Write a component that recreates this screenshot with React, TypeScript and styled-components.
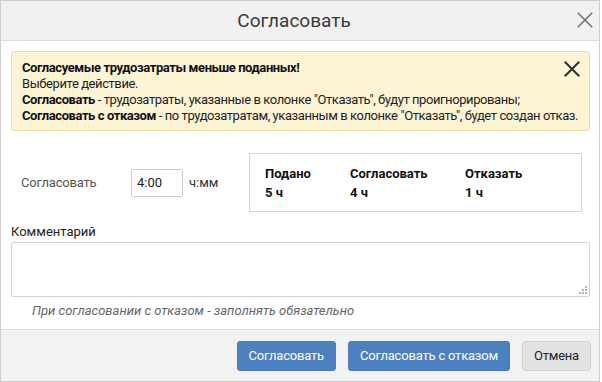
import React from "react";
import styled, { createGlobalStyle } from "styled-components";

const GlobalStyle = createGlobalStyle`
  html, body {
    margin: 0;
    padding: 0;
    background: #ffffff;
  }
  body {
    font-family: Roboto, "Liberation Sans", Arial, sans-serif;
    font-size: 13px;
    color: #222;
  }
`;

const Dialog = styled.div`
  box-sizing: border-box;
  width: 600px;
  height: 382px;
  border: 1px solid #cfcfcf;
  display: flex;
  flex-direction: column;
  background: #fff;
`;

const Header = styled.div`
  position: relative;
  height: 39px;
  flex: none;
  background: #f1f1f1;
  border-bottom: 1px solid #dcdcdc;
  display: flex;
  align-items: center;
  justify-content: center;
`;

const Title = styled.div`
  font-size: 19px;
  color: #3a3a3a;
  margin-left: -12px;
`;

const CloseButton = styled.button<{ $size: number; $color: string }>`
  position: absolute;
  top: 10px;
  right: 5px;
  border: 0;
  background: transparent;
  padding: 0;
  width: ${(p) => p.$size}px;
  height: ${(p) => p.$size}px;
  color: ${(p) => p.$color};
  display: flex;
  cursor: pointer;
`;

const Body = styled.div`
  flex: 1;
  padding: 10px 9px 0 10px;
  display: flex;
  flex-direction: column;
`;

const Alert = styled.div`
  position: relative;
  height: 80px;
  box-sizing: border-box;
  background: #fdf4d6;
  border: 1px solid #f0dc9e;
  border-radius: 3px;
  padding: 8px 0 0 10px;
  line-height: 16px;
  letter-spacing: -0.42px;
  color: #1e1e1e;
`;

const AlertClose = styled(CloseButton)`
  top: 8px;
  right: 8px;
`;

const Strong = styled.b`
  font-weight: bold;
  color: #111;
`;

const Row = styled.div`
  display: flex;
  align-items: center;
  margin-top: 22px;
  height: 59px;
`;

const FieldLabel = styled.div`
  width: 110px;
  padding-left: 10px;
  letter-spacing: -0.2px;
  color: #555;
`;

const TimeInput = styled.input`
  box-sizing: border-box;
  width: 52px;
  height: 28px;
  border: 1px solid #cccccc;
  border-radius: 2px;
  font-family: inherit;
  font-size: 13px;
  padding: 0 5px;
  color: #222;
  outline: none;
`;

const Unit = styled.div`
  margin-left: 6px;
  width: 60px;
  color: #333;
`;

const Summary = styled.div`
  box-sizing: border-box;
  width: 333px;
  height: 59px;
  border: 1px solid #c7d5e8;
  padding: 12px 0 0 15px;
  display: grid;
  grid-template-columns: 85px 115px 1fr;
  grid-auto-rows: 16px;
  row-gap: 3px;
  line-height: 16px;
  font-weight: bold;
  color: #111;
`;

const CommentLabel = styled.div`
  margin-top: 12px;
  line-height: 16px;
  color: #222;
`;

const TextAreaWrap = styled.div`
  position: relative;
  margin-top: 2px;
`;

const Comment = styled.textarea`
  box-sizing: border-box;
  display: block;
  width: 100%;
  height: 55px;
  border: 1px solid #d4d4d4;
  border-radius: 2px;
  resize: none;
  font-family: inherit;
  outline: none;
`;

const Grip = styled.svg`
  position: absolute;
  right: 3px;
  bottom: 3px;
`;

const Hint = styled.div`
  margin-top: 6px;
  padding-left: 21px;
  line-height: 16px;
  font-style: italic;
  color: #666;
`;

const Footer = styled.div`
  height: 51px;
  flex: none;
  background: #f2f2f2;
  border-top: 1px solid #dedede;
  display: flex;
  align-items: center;
  justify-content: flex-end;
  padding-right: 8px;
  gap: 12px;
`;

const Button = styled.button<{ $primary?: boolean }>`
  height: 30px;
  padding: 0 11px;
  border-radius: 3px;
  font-family: inherit;
  font-size: 13px;
  letter-spacing: -0.2px;
  cursor: pointer;
  border: 1px solid ${(p) => (p.$primary ? "#4a7cbc" : "#d2d2d2")};
  background: ${(p) => (p.$primary ? "#4d80c1" : "#e2e2e2")};
  color: ${(p) => (p.$primary ? "#ffffff" : "#222222")};
`;

const Cross = ({ size, width }: { size: number; width: number }) => (
  <svg width={size} height={size} viewBox="0 0 20 20" fill="none">
    <path d="M2 2 L18 18 M18 2 L2 18" stroke="currentColor" strokeWidth={width} />
  </svg>
);

export default function App() {
  const stats = [
    { label: "Подано", value: "5 ч" },
    { label: "Согласовать", value: "4 ч" },
    { label: "Отказать", value: "1 ч" },
  ];

  return (
    <>
      <GlobalStyle />
      <Dialog>
        <Header>
          <Title>Согласовать</Title>
          <CloseButton $size={18} $color="#666b70" aria-label="Закрыть">
            <Cross size={18} width={1.6} />
          </CloseButton>
        </Header>
        <Body>
          <Alert>
            <Strong>Согласуемые трудозатраты меньше поданных!</Strong>
            <br />
            Выберите действие.
            <br />
            <Strong>Согласовать</Strong> - трудозатраты, указанные в колонке "Отказать", будут
            проигнорированы;
            <br />
            <Strong>Согласовать с отказом</Strong> - по трудозатратам, указанным в колонке
            "Отказать", будет создан отказ.
            <AlertClose $size={18} $color="#2b2f33" aria-label="Скрыть">
              <Cross size={18} width={2.2} />
            </AlertClose>
          </Alert>
          <Row>
            <FieldLabel>Согласовать</FieldLabel>
            <TimeInput defaultValue="4:00" />
            <Unit>ч:мм</Unit>
            <Summary>
              {stats.map((s) => (
                <div key={s.label}>{s.label}</div>
              ))}
              {stats.map((s) => (
                <div key={s.label + "v"}>{s.value}</div>
              ))}
            </Summary>
          </Row>
          <CommentLabel>Комментарий</CommentLabel>
          <TextAreaWrap>
            <Comment />
            <Grip width="8" height="8" viewBox="0 0 8 8" fill="#b5b5b5">
              <rect x="6" y="0" width="2" height="2" />
              <rect x="3" y="3" width="2" height="2" />
              <rect x="6" y="3" width="2" height="2" />
              <rect x="0" y="6" width="2" height="2" />
              <rect x="3" y="6" width="2" height="2" />
              <rect x="6" y="6" width="2" height="2" />
            </Grip>
          </TextAreaWrap>
          <Hint>При согласовании с отказом - заполнять обязательно</Hint>
        </Body>
        <Footer>
          <Button $primary>Согласовать</Button>
          <Button $primary>Согласовать с отказом</Button>
          <Button>Отмена</Button>
        </Footer>
      </Dialog>
    </>
  );
}
